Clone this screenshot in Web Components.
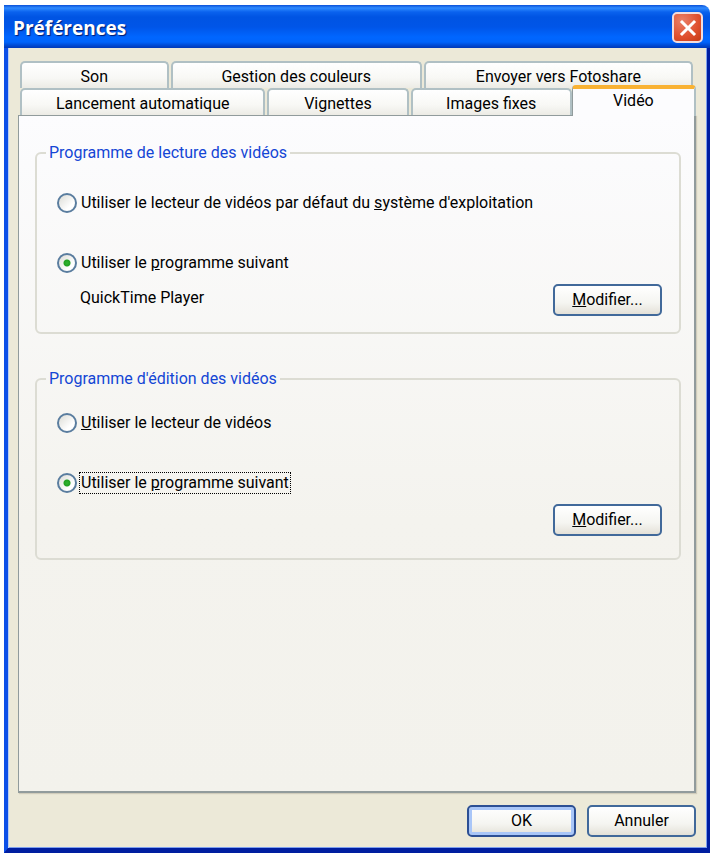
<!DOCTYPE html>
<html lang="fr">
<head>
<meta charset="utf-8">
<title>Préférences</title>
<style>
    body {
        margin: 0;
        background: white;
        font-family: Roboto, "Liberation Sans", sans-serif;
        font-size: 16px;
        line-height: 20px;
        color: black;
    }
</style>
</head>
<body>

<xp-window heading="Préférences">
    <xp-tab slot="back" style="flex-grow: 148">Son</xp-tab>
    <xp-tab slot="back" style="flex-grow: 250">Gestion des couleurs</xp-tab>
    <xp-tab slot="back" style="flex-grow: 268">Envoyer vers Fotoshare</xp-tab>

    <xp-tab slot="front" style="flex-grow: 245">Lancement automatique</xp-tab>
    <xp-tab slot="front" style="flex-grow: 141">Vignettes</xp-tab>
    <xp-tab slot="front" style="flex-grow: 161">Images fixes</xp-tab>
    <xp-tab slot="front" style="flex-grow: 124" active>Vidéo</xp-tab>

    <xp-group legend="Programme de lecture des vidéos" style="--top: 28px; --bottom: 16px">
        <xp-radio>Utiliser le lecteur de vidéos par défaut du <u>s</u>ystème d'exploitation</xp-radio>
        <xp-radio checked>Utiliser le <u>p</u>rogramme suivant</xp-radio>
        <span slot="note">QuickTime Player</span>
        <xp-button slot="action"><u>M</u>odifier...</xp-button>
    </xp-group>

    <xp-group legend="Programme d'édition des vidéos" style="--top: 22px; --bottom: 22px">
        <xp-radio><u>U</u>tiliser le lecteur de vidéos</xp-radio>
        <xp-radio checked focused>Utiliser le <u>p</u>rogramme suivant</xp-radio>
        <xp-button slot="action"><u>M</u>odifier...</xp-button>
    </xp-group>

    <xp-button slot="footer" primary>OK</xp-button>
    <xp-button slot="footer">Annuler</xp-button>
</xp-window>

<script>
class XpWindow extends HTMLElement {

    constructor() {
        super()
        this.attachShadow({ mode: "open" });
    }

    connectedCallback() {
        this.shadowRoot.innerHTML = `
            <style>
                :host {
                    display: flex;
                    flex-direction: column;
                    box-sizing: border-box;
                    min-height: 100vh;
                    padding: 5px 0 0 4px;
                }

                header {
                    display: flex;
                    align-items: center;
                    justify-content: space-between;
                    box-sizing: border-box;
                    height: 43px;
                    padding: 2px 7px 0 9px;
                    border-radius: 0 8px 0 0;
                    background: linear-gradient(#0a50d8 0, #2f8bff 3px, #0a62ee 7px, #0054e3 12px, #0055e8 22px, #0066ff 32px, #0064fc 37px, #0045cc 41px, #0039b8 43px);
                }

                h1 {
                    margin: 0;
                    font-family: "Open Sans", sans-serif;
                    font-size: 19px;
                    line-height: 24px;
                    font-weight: bold;
                    color: white;
                    text-shadow: 1px 1px 1px #001a70;
                }

                .close {
                    display: flex;
                    align-items: center;
                    justify-content: center;
                    width: 31px;
                    height: 31px;
                    padding: 0;
                    border: 2px solid #f3dcdc;
                    border-radius: 5px;
                    background: radial-gradient(circle at 30% 25%, #ea8069, #df4f2d 60%, #c43a15);
                }

                .body {
                    display: flex;
                    flex-direction: column;
                    flex: 1;
                    padding: 13px 11px 11px 10px;
                    border: solid;
                    border-width: 0 3px 5px 4px;
                    border-color: #0831d9 #001ea0 #001ea0 #0c4fe8;
                    background: #ece9d8;
                    box-shadow: inset 1px 0 0 #b9cdf5, inset -1px -1px 0 #7ea0ee;
                }

                .tabs {
                    display: flex;
                    gap: 2px;
                    height: 27px;
                    padding: 0 3px 0 2px;
                }

                .front {
                    padding-right: 0;
                    position: relative;
                    z-index: 1;
                }

                main {
                    display: flex;
                    flex-direction: column;
                    gap: 35px;
                    flex: 1;
                    padding: 27px 13px 26px 16px;
                    border: 1px solid #919b9c;
                    border-right-width: 2px;
                    border-bottom-width: 2px;
                    background: linear-gradient(#fcfcfe, #f4f3ee 60%, #f3f2ec);
                    box-shadow: 1px 1px 1px #d0ccbb;
                }

                footer {
                    display: flex;
                    justify-content: flex-end;
                    gap: 11px;
                    padding-top: 12px;
                }
            </style>

            <header>
                <h1></h1>
                <button class="close" aria-label="Fermer">
                    <svg width="20" height="20" viewBox="0 0 20 20">
                        <path d="M4 4L16 16M16 4L4 16" stroke="white" stroke-width="3" stroke-linecap="square"/>
                    </svg>
                </button>
            </header>
            <div class="body">
                <div class="tabs"><slot name="back"></slot></div>
                <div class="tabs front"><slot name="front"></slot></div>
                <main><slot></slot></main>
                <footer><slot name="footer"></slot></footer>
            </div>
        `;
        this.shadowRoot.querySelector('h1').textContent = this.getAttribute("heading");
    }
}

class XpTab extends HTMLElement {

    constructor() {
        super()
        this.attachShadow({ mode: "open" });
    }

    connectedCallback() {
        this.shadowRoot.innerHTML = `
            <style>
                :host {
                    display: flex;
                    flex-basis: 0;
                    min-width: 0;
                }

                button {
                    flex: 1;
                    padding: 2px 0 0;
                    border: 2px solid #b0c0c4;
                    border-bottom: 0;
                    border-radius: 5px 5px 0 0;
                    background: linear-gradient(#ffffff, #f8f8f5 60%, #ecebe5);
                    font: inherit;
                    color: inherit;
                    white-space: nowrap;
                }

                /* the active tab stands taller and covers the panel's top line */
                :host([active]) {
                    margin: -3px 0 -1px -2px;
                }

                :host([active]) button {
                    padding: 0 0 3px;
                    border-top: 4px solid #f9b233;
                    border-left: 1px solid #919b9c;
                    border-radius: 4px 4px 0 0;
                    background: #fcfcfe;
                }
            </style>

            <button role="tab"><slot></slot></button>
        `;
        this.shadowRoot.querySelector('button').setAttribute('aria-selected', this.hasAttribute('active'));
    }
}

class XpGroup extends HTMLElement {

    constructor() {
        super()
        this.attachShadow({ mode: "open" });
    }

    connectedCallback() {
        this.shadowRoot.innerHTML = `
            <style>
                :host {
                    display: block;
                }

                fieldset {
                    min-width: 0;
                    margin: 0;
                    padding: var(--top) 17px var(--bottom) 20px;
                    border: 2px solid #dcdcd3;
                    border-radius: 6px;
                }

                legend {
                    margin-left: -11px;
                    padding: 0 3px;
                    color: #1446d5;
                }

                .choices {
                    display: flex;
                    flex-direction: column;
                    align-items: flex-start;
                    gap: 36px;
                }

                .row {
                    display: flex;
                    justify-content: space-between;
                    margin-top: 9px;
                }

                .note {
                    padding: 4px 0 0 23px;
                }
            </style>

            <fieldset>
                <legend></legend>
                <div class="choices"><slot></slot></div>
                <div class="row">
                    <div class="note"><slot name="note"></slot></div>
                    <slot name="action"></slot>
                </div>
            </fieldset>
        `;
        this.shadowRoot.querySelector('legend').textContent = this.getAttribute("legend");

        // radios sit in separate shadow roots, so the group keeps them exclusive
        this.addEventListener('radioPicked', (event) => {
            this.querySelectorAll('xp-radio').forEach((radio) => {
                if (radio !== event.target) {
                    radio.input.checked = false;
                }
            });
        });
    }
}

class XpRadio extends HTMLElement {

    constructor() {
        super()
        this.attachShadow({ mode: "open" });
    }

    connectedCallback() {
        this.shadowRoot.innerHTML = `
            <style>
                :host {
                    display: block;
                }

                label {
                    display: flex;
                    align-items: center;
                    gap: 3px;
                    height: 24px;
                }

                input {
                    appearance: none;
                    flex: none;
                    width: 20px;
                    height: 20px;
                    margin: 0;
                    border: 2px solid #5a7d9f;
                    border-radius: 50%;
                    background: linear-gradient(135deg, #dcdcd6, #ffffff 70%);
                }

                input:checked {
                    background: radial-gradient(circle, #2fb32f 0, #22a022 3px, transparent 4px), linear-gradient(135deg, #dcdcd6, #ffffff 70%);
                }

                .text {
                    padding: 0 1px;
                    white-space: nowrap;
                }

                :host([focused]) .text {
                    outline: 1px dotted black;
                }
            </style>

            <label>
                <input type="radio">
                <span class="text"><slot></slot></span>
            </label>
        `;
        this.input = this.shadowRoot.querySelector('input');
        this.input.checked = this.hasAttribute('checked');
        this.input.addEventListener('change', () => {
            this.dispatchEvent(new CustomEvent("radioPicked", { bubbles: true }));
        });
    }
}

class XpButton extends HTMLElement {

    constructor() {
        super()
        this.attachShadow({ mode: "open" });
    }

    connectedCallback() {
        this.shadowRoot.innerHTML = `
            <style>
                :host {
                    display: block;
                }

                button {
                    min-width: 109px;
                    height: 32px;
                    padding: 0 12px;
                    border: 2px solid #41699a;
                    border-radius: 5px;
                    background: linear-gradient(#ffffff, #f5f5f1 60%, #e4e1d8);
                    font: inherit;
                    color: inherit;
                }

                :host([primary]) button {
                    border-color: #2c4f94;
                    box-shadow: inset 0 0 0 3px #a9c6f8;
                }
            </style>

            <button><slot></slot></button>
        `;
    }
}

customElements.define("xp-window", XpWindow);
customElements.define("xp-tab", XpTab);
customElements.define("xp-group", XpGroup);
customElements.define("xp-radio", XpRadio);
customElements.define("xp-button", XpButton);
</script>
</body>
</html>
